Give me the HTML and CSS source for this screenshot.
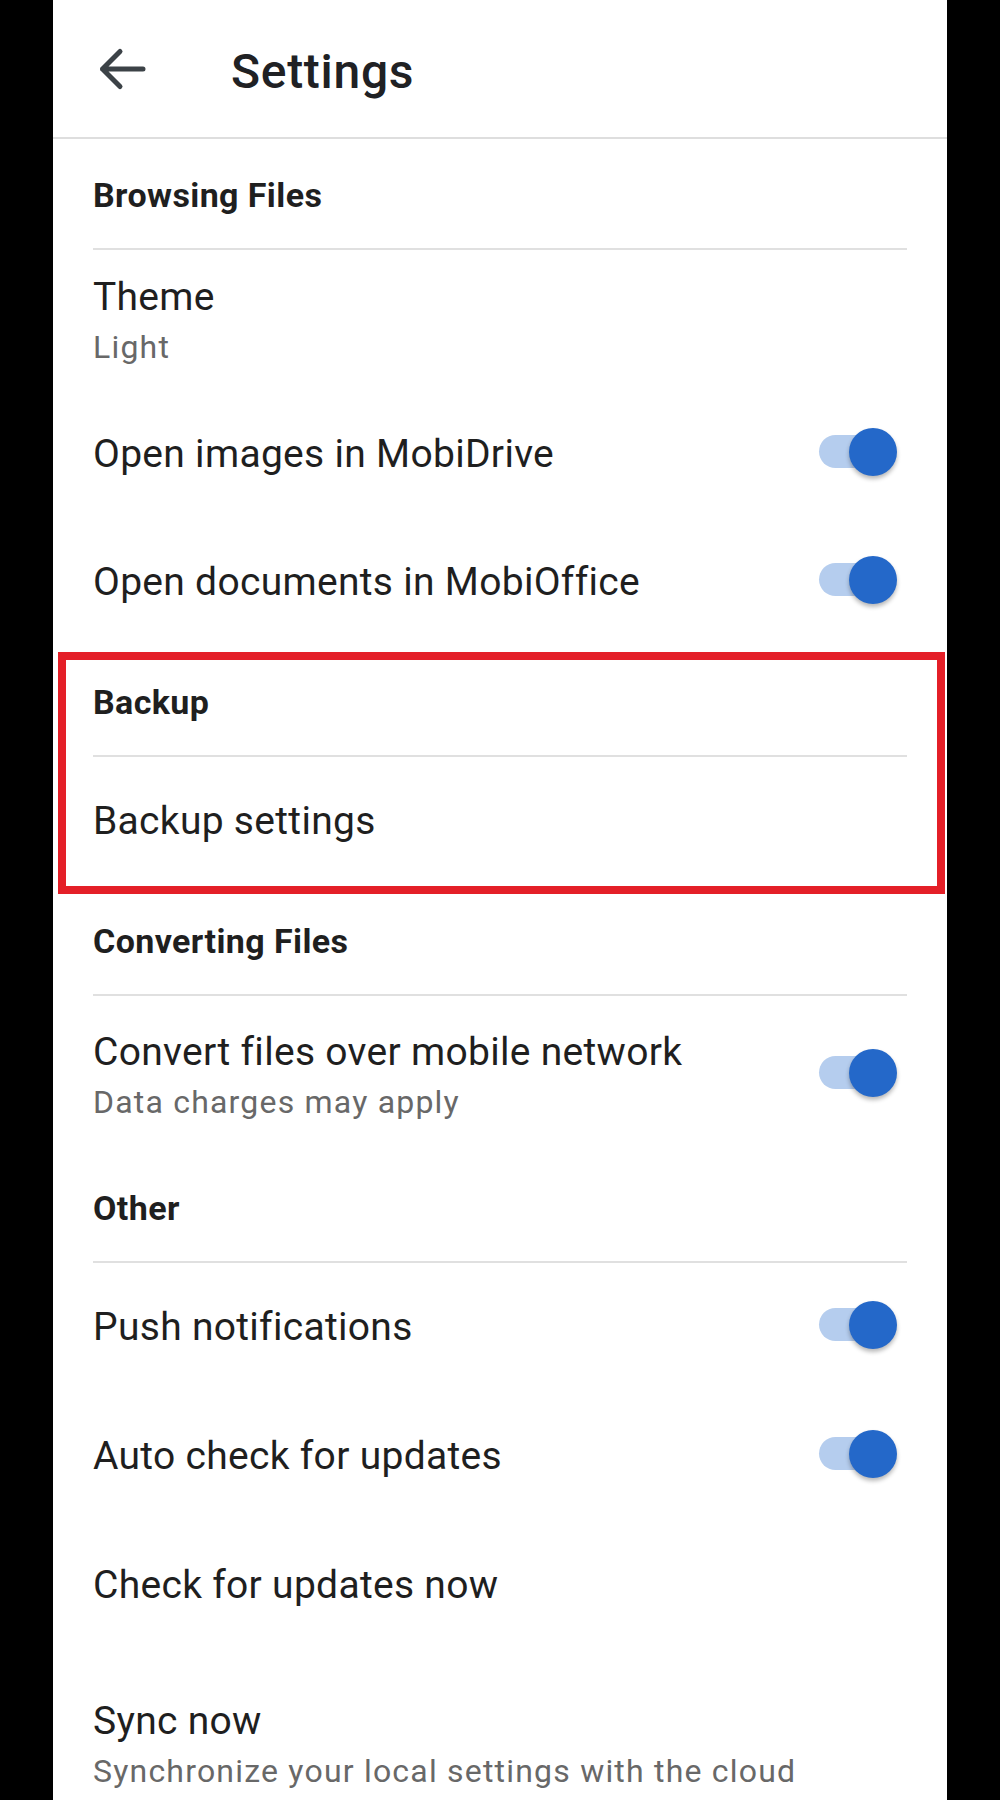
FILE: index.html
```html
<!DOCTYPE html>
<html lang="en">
<head>
<meta charset="utf-8">
<title>Settings</title>
<link rel="stylesheet" href="styles.css">
</head>
<body>
<div class="screen">
  <header class="appbar">
    <svg class="back" width="52" height="44" viewBox="0 0 52 44" aria-hidden="true">
      <path d="M46 22 H5.5 M23 4.5 L5.5 22 L23 39.5" fill="none" stroke="#3c4247" stroke-width="5" stroke-linecap="round" stroke-linejoin="round"/>
    </svg>
    <h1 class="appbar-title">Settings</h1>
  </header>

  <section class="group">
    <h2 class="group-title">Browsing Files</h2>
    <div class="row row--two">
      <div class="row-text">
        <div class="row-title">Theme</div>
        <div class="row-sub">Light</div>
      </div>
    </div>
    <div class="row">
      <div class="row-text"><div class="row-title">Open images in MobiDrive</div></div>
      <div class="switch"><span class="switch-track"></span><span class="switch-thumb"></span></div>
    </div>
    <div class="row">
      <div class="row-text"><div class="row-title">Open documents in MobiOffice</div></div>
      <div class="switch"><span class="switch-track"></span><span class="switch-thumb"></span></div>
    </div>
  </section>

  <section class="group group--marked">
    <h2 class="group-title">Backup</h2>
    <div class="row">
      <div class="row-text"><div class="row-title">Backup settings</div></div>
    </div>
  </section>

  <section class="group">
    <h2 class="group-title">Converting Files</h2>
    <div class="row row--convert">
      <div class="row-text">
        <div class="row-title">Convert files over mobile network</div>
        <div class="row-sub">Data charges may apply</div>
      </div>
      <div class="switch"><span class="switch-track"></span><span class="switch-thumb"></span></div>
    </div>
  </section>

  <section class="group">
    <h2 class="group-title">Other</h2>
    <div class="row row--tall">
      <div class="row-text"><div class="row-title">Push notifications</div></div>
      <div class="switch"><span class="switch-track"></span><span class="switch-thumb"></span></div>
    </div>
    <div class="row row--tall">
      <div class="row-text"><div class="row-title">Auto check for updates</div></div>
      <div class="switch"><span class="switch-track"></span><span class="switch-thumb"></span></div>
    </div>
    <div class="row row--tall">
      <div class="row-text"><div class="row-title">Check for updates now</div></div>
    </div>
    <div class="row row--sync">
      <div class="row-text">
        <div class="row-title">Sync now</div>
        <div class="row-sub">Synchronize your local settings with the cloud</div>
      </div>
    </div>
  </section>
</div>
</body>
</html>
```

FILE: styles.css
```css
* {
  box-sizing: border-box;
}

html, body {
  margin: 0;
  padding: 0;
  background: #000;
}

body {
  font-family: Roboto, "Noto Sans", "Liberation Sans", sans-serif;
  color: #1f1f1f;
  height: 1800px;
  overflow: hidden;
}

.screen {
  width: 894px;
  margin: 0 auto;
  min-height: 1800px;
  background: #fff;
}

/* App bar */
.appbar {
  display: flex;
  align-items: center;
  height: 139px;
  padding-left: 44px;
  border-bottom: 2px solid #dedede;
}

.back {
  flex: none;
  display: block;
}

.appbar-title {
  margin: 6px 0 0 82px;
  font-size: 48px;
  line-height: 56px;
  font-weight: 500;
  letter-spacing: 0.7px;
  color: #202124;
}

/* Groups */
.group {
  display: flex;
  flex-direction: column;
}

.group--marked {
  position: relative;
}

.group--marked::after {
  content: "";
  position: absolute;
  left: 5px;
  right: 2px;
  top: 6px;
  bottom: -9px;
  border: 8px solid #e41f28;
  pointer-events: none;
}

.group-title {
  margin: 0 40px;
  padding: 36px 0 33px;
  border-bottom: 2px solid #e0e0e0;
  font-size: 34px;
  line-height: 40px;
  font-weight: 700;
  letter-spacing: 0.4px;
  color: #1f1f1f;
}

/* Rows */
.row {
  display: flex;
  align-items: center;
  justify-content: space-between;
  padding: 40px 40px;
  height: 128px;
}

.row--two {
  padding: 23px 40px;
  height: 140px;
}

.row--convert {
  padding: 32px 40px 30px;
  height: 156px;
}

.row--tall {
  padding: 40px 40px 41px;
  height: 129px;
}

.row--sync {
  padding: 47px 40px 0;
  height: auto;
  align-items: flex-start;
}

.row-text {
  display: flex;
  flex-direction: column;
}

.row-title {
  font-size: 39px;
  line-height: 48px;
  letter-spacing: 0.3px;
  color: #1f1f1f;
}

.row-sub {
  margin-top: 6px;
  font-size: 32px;
  line-height: 40px;
  letter-spacing: 1.2px;
  color: #686868;
  white-space: nowrap;
}

/* Switch */
.switch {
  position: relative;
  flex: none;
  width: 78px;
  height: 48px;
  margin-right: 10px;
  margin-top: -4px;
}

.switch-track {
  position: absolute;
  left: 0;
  top: 7px;
  width: 60px;
  height: 33px;
  border-radius: 17px;
  background: #b5cdee;
}

.switch-thumb {
  position: absolute;
  right: 0;
  top: 0;
  width: 48px;
  height: 48px;
  border-radius: 50%;
  background: #2468c9;
  box-shadow: 0 3px 4px rgba(0, 0, 0, 0.28);
}
```
